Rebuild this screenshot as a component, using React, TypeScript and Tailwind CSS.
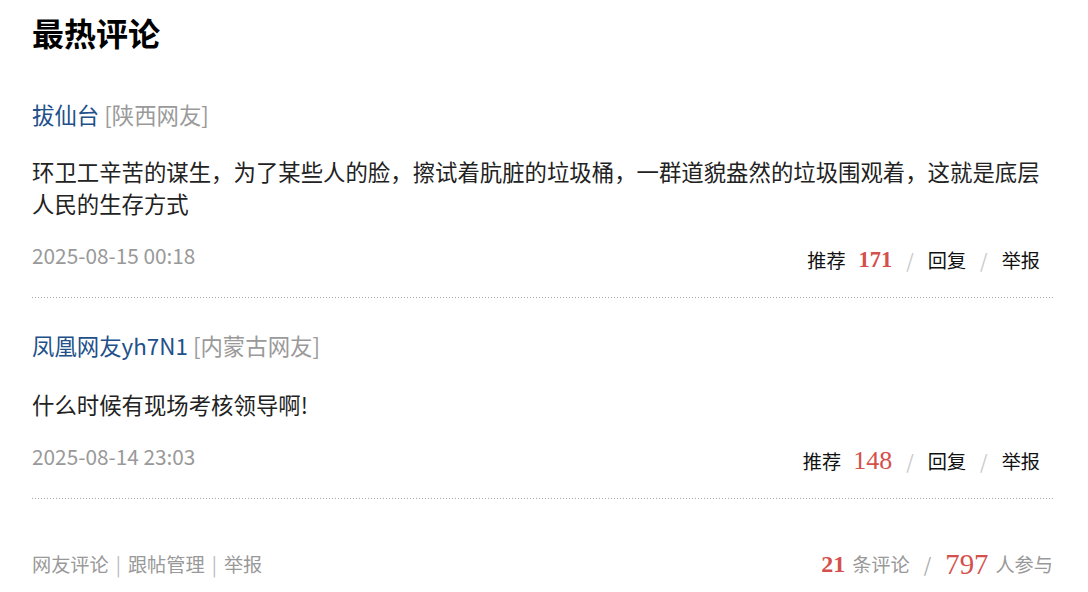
import React from "react";

const sans = { fontFamily: '"Noto Sans CJK SC", "Noto Sans", sans-serif' };

function Actions({ count, big }: { count: string; big?: boolean }) {
  return (
    <div className="flex items-center text-[19.2px] leading-[28px] text-[#111] mt-[5px] mr-[15px]">
      <span>推荐</span>
      {big ? (
        <span className="ml-[12px] text-[26px] leading-[28px] text-[#d4504b] font-['Liberation_Serif',serif]">{count}</span>
      ) : (
        <span className="ml-[13px] text-[22.4px] leading-[28px] font-bold text-[#d4504b] font-['Liberation_Serif',serif]">{count}</span>
      )}
      <span className="mx-[14px] text-[#c8c8c8]">/</span>
      <span>回复</span>
      <span className="mx-[14px] text-[#c8c8c8]">/</span>
      <span>举报</span>
    </div>
  );
}

function Dots() {
  return <div className="h-px w-full bg-[linear-gradient(to_right,#a8a8a8_1px,transparent_1px)] bg-[length:3px_1px]" />;
}

export default function App() {
  return (
    <div style={sans} className="w-[1088px] h-[592px] bg-white pl-8 pr-[33px] pt-[12px] overflow-hidden">
      <h2 className="text-[32px] leading-[40px] font-bold text-black">最热评论</h2>

      <div className="pt-[47px] pb-[23px]">
        <div className="text-[22.4px] leading-[30px]">
          <span className="text-[#22508a]">拔仙台</span>
          <span className="text-[#9a9a9a]"> [陕西网友]</span>
        </div>
        <p className="mt-[26px] text-[22.4px] leading-[32px] text-[#222]">
          环卫工辛苦的谋生，为了某些人的脸，擦试着肮脏的垃圾桶，一群道貌盎然的垃圾围观着，这就是底层人民的生存方式
        </p>
        <div className="mt-[22px] flex justify-between items-start">
          <span className="text-[20.8px] leading-[28px] text-[#999]">2025-08-15 00:18</span>
          <Actions count="171" />
        </div>
      </div>
      <Dots />

      <div className="pt-[32px] pb-[23px]">
        <div className="text-[22.4px] leading-[30px]">
          <span className="text-[#22508a]">凤凰网友yh7N1</span>
          <span className="text-[#9a9a9a]"> [内蒙古网友]</span>
        </div>
        <p className="mt-[28px] text-[22.4px] leading-[32px] text-[#222]">什么时候有现场考核领导啊!</p>
        <div className="mt-[22px] flex justify-between items-start">
          <span className="text-[20.8px] leading-[28px] text-[#999]">2025-08-14 23:03</span>
          <Actions count="148" big />
        </div>
      </div>
      <Dots />

      <div className="mt-[51px] flex justify-between items-center text-[19.2px] leading-[28px]">
        <div className="flex items-center text-[#999]">
          <span>网友评论</span>
          <span className="mx-[7px] text-[#bbb]">|</span>
          <span>跟帖管理</span>
          <span className="mx-[7px] text-[#bbb]">|</span>
          <span>举报</span>
        </div>
        <div className="flex items-center text-[#999] mr-[2px]">
          <span className="text-[24px] font-bold text-[#d4504b] font-['Liberation_Serif',serif]">21</span>
          <span className="ml-[7px]">条评论</span>
          <span className="mx-[14px] text-[#aaa]">/</span>
          <span className="text-[28.8px] text-[#d4504b] font-['Liberation_Serif',serif]">797</span>
          <span className="ml-[7px]">人参与</span>
        </div>
      </div>
    </div>
  );
}
